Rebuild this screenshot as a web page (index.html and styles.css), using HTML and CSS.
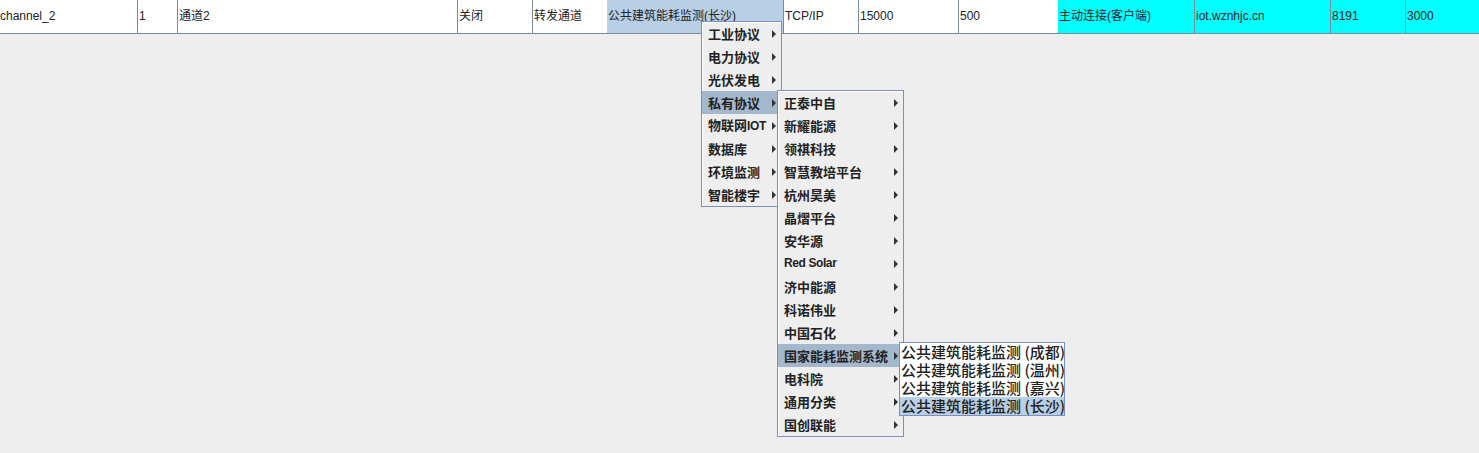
FILE: index.html
```html
<!DOCTYPE html>
<html>
<head>
<meta charset="utf-8">
<link rel="stylesheet" href="styles.css">
</head>
<body>
<div class="table">
  <div class="row">
    <div class="cell c1 first">channel_2</div>
    <div class="cell c2">1</div>
    <div class="cell c3">通道2</div>
    <div class="cell c4">关闭</div>
    <div class="cell c5 nob">转发通道</div>
    <div class="cell c6 sel">公共建筑能耗监测(长沙)</div>
    <div class="cell c7">TCP/IP</div>
    <div class="cell c8">15000</div>
    <div class="cell c9 nob">500</div>
    <div class="cell c10 cyan">主动连接(客户端)</div>
    <div class="cell c11 cyan">iot.wznhjc.cn</div>
    <div class="cell c12 cyan">8191</div>
    <div class="cell c13 cyan">3000</div>
  </div>
</div>

<div class="menu m1">
  <div class="mi"><span>工业协议</span><i class="arr"></i></div>
  <div class="mi"><span>电力协议</span><i class="arr"></i></div>
  <div class="mi"><span>光伏发电</span><i class="arr"></i></div>
  <div class="mi hl"><span>私有协议</span><i class="arr"></i></div>
  <div class="mi"><span>物联网<b class="lat">IOT</b></span><i class="arr"></i></div>
  <div class="mi"><span>数据库</span><i class="arr"></i></div>
  <div class="mi"><span>环境监测</span><i class="arr"></i></div>
  <div class="mi"><span>智能楼宇</span><i class="arr"></i></div>
</div>

<div class="menu m2">
  <div class="mi"><span>正泰中自</span><i class="arr"></i></div>
  <div class="mi"><span>新耀能源</span><i class="arr"></i></div>
  <div class="mi"><span>领祺科技</span><i class="arr"></i></div>
  <div class="mi"><span>智慧教培平台</span><i class="arr"></i></div>
  <div class="mi"><span>杭州昊美</span><i class="arr"></i></div>
  <div class="mi"><span>晶熠平台</span><i class="arr"></i></div>
  <div class="mi"><span>安华源</span><i class="arr"></i></div>
  <div class="mi"><span class="lat">Red Solar</span><i class="arr"></i></div>
  <div class="mi"><span>济中能源</span><i class="arr"></i></div>
  <div class="mi"><span>科诺伟业</span><i class="arr"></i></div>
  <div class="mi"><span>中国石化</span><i class="arr"></i></div>
  <div class="mi hl"><span>国家能耗监测系统</span><i class="arr"></i></div>
  <div class="mi"><span>电科院</span><i class="arr"></i></div>
  <div class="mi"><span>通用分类</span><i class="arr"></i></div>
  <div class="mi"><span>国创联能</span><i class="arr"></i></div>
</div>

<div class="menu m3">
  <div class="mi3">公共建筑能耗监测 (成都)</div>
  <div class="mi3">公共建筑能耗监测 (温州)</div>
  <div class="mi3">公共建筑能耗监测 (嘉兴)</div>
  <div class="mi3 sel3">公共建筑能耗监测 (长沙)</div>
</div>
</body>
</html>
```

FILE: styles.css
```css
* { box-sizing: border-box; }
html, body {
  margin: 0;
  padding: 0;
  background: #eeeeee;
  width: 1479px;
  height: 453px;
  overflow: hidden;
}
body {
  font-family: "Liberation Sans", "Noto Sans CJK SC", sans-serif;
  font-size: 12px;
  color: #222222;
}
.table {
  width: 1479px;
}
.row {
  display: flex;
  height: 34px;
  border-bottom: 1px solid #7a8a99;
  background: #ffffff;
}
.cell {
  height: 33px;
  line-height: 33px;
  padding-left: 1px;
  border-right: 1px solid #7a8a99;
  white-space: nowrap;
  overflow: hidden;
  flex: none;
}
.cell.first { padding-left: 0; }
.cell.nob { border-right: none; }
.c1 { width: 138px; }
.c2 { width: 40px; }
.c3 { width: 280px; }
.c4 { width: 75px; }
.c5 { width: 74px; }
.c6 { width: 177px; }
.c7 { width: 75px; }
.c8 { width: 100px; }
.c9 { width: 99px; }
.c10 { width: 137px; }
.c11 { width: 136px; }
.c12 { width: 75px; }
.c13 { flex: 1; border-right: none; }
.sel { background: #b8cfe5; }
.cyan { background: #00ffff; }

.menu {
  position: absolute;
  background: #eeeeee;
  border: 1px solid #7a8fc6;
  box-shadow: inset 1px 1px 0 #ffffff;
  font-family: "Noto Sans CJK SC", "Liberation Sans", sans-serif;
  font-weight: 700;
  font-size: 13px;
  color: #222222;
}
.m1 { left: 701px; top: 21px; width: 81px; }
.m2 { left: 777px; top: 90px; width: 127px; }
.m3 {
  left: 899px;
  top: 342px;
  width: 166px;
  background: #ffffff;
  box-shadow: none;
}
.mi {
  height: 23px;
  line-height: 23px;
  display: flex;
  align-items: center;
  justify-content: space-between;
  padding-left: 6px;
  padding-right: 5px;
  white-space: nowrap;
}
.mi.hl { background: #a3b8cc; }
.lat {
  font-family: "Liberation Sans", sans-serif;
  font-weight: 700;
  font-size: 12px;
  letter-spacing: -0.4px;
}
.arr {
  display: block;
  width: 0;
  height: 0;
  border-left: 4px solid #333333;
  border-top: 4px solid transparent;
  border-bottom: 4px solid transparent;
}
.mi3 {
  height: 18px;
  line-height: 18px;
  padding-left: 1px;
  font-size: 15px;
  font-weight: 500;
  white-space: nowrap;
}
.mi3.sel3 { background: #b8cfe5; }
```
